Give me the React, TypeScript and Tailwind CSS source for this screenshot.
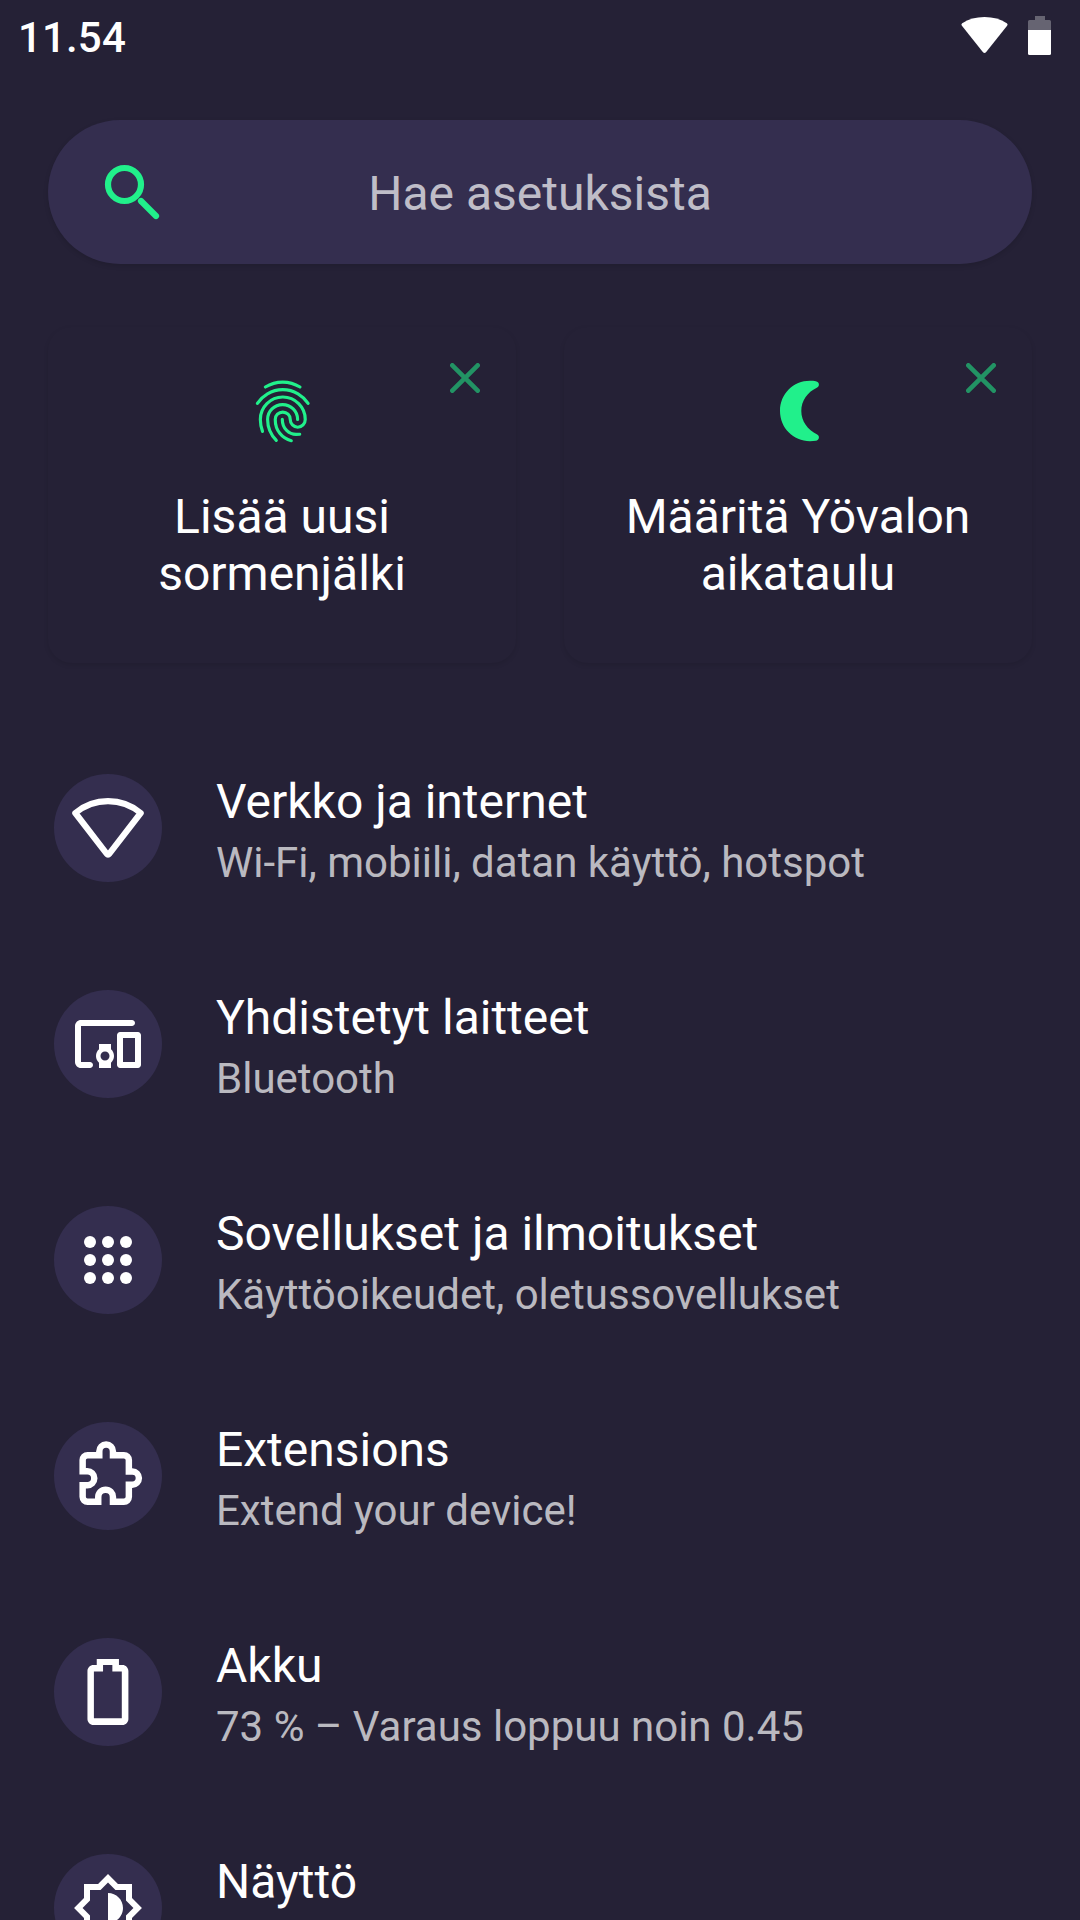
import React from 'react';

type RowProps = { icon: React.ReactNode; title: string; summary?: string };

const WifiIcon = () => (
  <svg viewBox="0 0 24 24" className="w-[72px] h-[72px]" fill="none" stroke="currentColor" strokeWidth="2.05" strokeLinejoin="round">
    <path d="M1.1 7A17 17 0 0 1 22.9 7L12.4 20.6Q12 21.1 11.6 20.6Z" />
  </svg>
);

const DevicesIcon = () => (
  <svg viewBox="0 0 24 24" className="w-[72px] h-[72px]" fill="currentColor">
    <path d="M3 6h17c.55 0 1-.45 1-1s-.45-1-1-1H3c-1.1 0-2 .9-2 2v12c0 1.1.9 2 2 2h3c.55 0 1-.45 1-1s-.45-1-1-1H3V6z" />
    <path d="M13 12H9v1.78c-.61.55-1 1.33-1 2.22s.39 1.67 1 2.22V20h4v-1.78c.61-.55 1-1.34 1-2.22s-.39-1.67-1-2.22V12zm-2 5.5c-.83 0-1.5-.67-1.5-1.5s.67-1.5 1.5-1.5 1.5.67 1.5 1.5-.67 1.5-1.5 1.5z" />
    <path d="M22 8h-6c-.5 0-1 .5-1 1v10c0 .5.5 1 1 1h6c.5 0 1-.5 1-1V9c0-.5-.5-1-1-1zm-1 10h-4v-8h4v8z" />
  </svg>
);

const AppsIcon = () => (
  <svg viewBox="0 0 24 24" className="w-[72px] h-[72px]" fill="currentColor">
    {[6, 12, 18].map(y => [6, 12, 18].map(x => <circle key={`${x}-${y}`} cx={x} cy={y} r="2" />))}
  </svg>
);

const ExtensionIcon = () => (
  <svg viewBox="0 0 24 24" className="w-[72px] h-[72px]" fill="none" stroke="currentColor" strokeWidth="2.15">
    <path d="M9.1 5.05V3.8a2.27 2.27 0 0 1 4.55 0V5.05H17.3a1.65 1.65 0 0 1 1.65 1.65V10.5H20.1a2.2 2.2 0 0 1 0 4.4H18.95V18.95a1.65 1.65 0 0 1-1.65 1.65H13.65V19a2.45 2.45 0 0 0-4.9 0V20.6H5.2a1.65 1.65 0 0 1-1.65-1.65V15.05H5.1a2.33 2.33 0 0 0 0-4.66H3.55V6.7A1.65 1.65 0 0 1 5.2 5.05Z" />
  </svg>
);

const BatteryIcon = () => (
  <svg viewBox="0 0 24 24" className="w-[72px] h-[72px]" fill="currentColor" fillRule="evenodd">
    <path d="M8.25 1H15.65V3H16.8C17.9 3 18.8 3.9 18.8 5V21C18.8 22.1 17.9 23 16.8 23H7.15C6.05 23 5.15 22.1 5.15 21V5C5.15 3.9 6.05 3 7.15 3H8.25ZM10.35 3V5.2H7.3V20.75H16.6V5.2H13.45V3Z" />
  </svg>
);

const BrightnessIcon = () => (
  <svg viewBox="0 0 24 24" className="w-[72px] h-[72px]" fill="currentColor">
    <path d="M20 8.69V4h-4.69L12 .69 8.69 4H4v4.69L.69 12 4 15.31V20h4.69L12 23.31 15.31 20H20v-4.69L23.31 12 20 8.69zm-2 5.79V18h-3.52L12 20.48 9.52 18H6v-3.52L3.52 12 6 9.52V6h3.52L12 3.52 14.48 6H18v3.52L20.48 12 18 14.48zM12 7v10c2.76 0 5-2.24 5-5s-2.24-5-5-5z" />
  </svg>
);

const FingerprintIcon = () => (
  <svg viewBox="0 0 24 24" className="w-[72px] h-[72px]" fill="none" stroke="currentColor" strokeWidth="1.05" strokeLinecap="round">
    <path d="M6.45 4A11 11 0 0 1 18 4" />
    <path d="M3.8 9.45A10.1 10.1 0 0 1 20.7 9.45" />
    <path d="M5.5 18.8C5 17.4 4.78 16.1 4.78 14.8A7.48 7.45 0 0 1 19.75 14.8A2.5 2.6 0 0 1 14.75 14.8A2.5 2.45 0 0 0 9.75 14.8C9.75 18.5 12 21.1 15.1 21.9" />
    <path d="M10.1 21.8C8.2 19.8 7.2 17.6 7.2 14.8A5 4.95 0 0 1 17.2 14.8" />
    <path d="M12.1 14.8C12.1 17.9 14.4 19.8 16.7 19.8C17.2 19.8 17.5 19.8 17.9 19.75" />
  </svg>
);

const MoonIcon = () => (
  <svg viewBox="0 0 24 24" className="w-[72px] h-[72px]" fill="currentColor">
    <path d="M16 1.95C10.4 1.95 6 6.4 6 12S10.4 22.05 16 22.05C16.7 22.05 17.4 22 17.95 21.9C19.1 21.7 19.35 20.3 18.4 19.8C15.2 18.3 13.1 15.4 13.1 12S15.2 5.7 18.4 4.2C19.35 3.7 19.1 2.3 17.95 2.1C17.4 2 16.7 1.95 16 1.95Z" />
  </svg>
);

const ROWS: RowProps[] = [
  { icon: <WifiIcon />, title: 'Verkko ja internet', summary: 'Wi-Fi, mobiili, datan käyttö, hotspot' },
  { icon: <DevicesIcon />, title: 'Yhdistetyt laitteet', summary: 'Bluetooth' },
  { icon: <AppsIcon />, title: 'Sovellukset ja ilmoitukset', summary: 'Käyttöoikeudet, oletussovellukset' },
  { icon: <ExtensionIcon />, title: 'Extensions', summary: 'Extend your device!' },
  { icon: <BatteryIcon />, title: 'Akku', summary: '73 % – Varaus loppuu noin 0.45' },
  { icon: <BrightnessIcon />, title: 'Näyttö' },
];

function StatusBar() {
  return (
    <header className="flex items-start justify-between shrink-0 h-[72px] pl-[18px] pr-[28px]">
      <span className="mt-[13px] text-[42px] leading-[49px] font-medium tracking-[0.15px]">11.54</span>
      <div className="flex items-start gap-5 pt-4">
        <svg viewBox="0 0 48 39" className="w-12 h-[39px]" fill="currentColor">
          <path d="M2.2 7.2Q11.5 1 24.5 1T46.8 7.2Q48.2 8.3 47.1 9.8L26 36.2Q24.5 37.8 23 36.2L1.9 9.8Q.8 8.3 2.2 7.2Z" />
        </svg>
        <svg viewBox="0 0 24 39" className="w-6 h-[39px]" fill="currentColor">
          <path opacity="0.3" d="M7 0H17V4H21.5Q23 4 23 5.5V14H0V5.5Q0 4 1.5 4H7Z" />
          <path d="M0 14H23V37.5Q23 39 21.5 39H1.5Q0 39 0 37.5Z" />
        </svg>
      </div>
    </header>
  );
}

function SuggestionCard({ icon, title }: { icon: React.ReactNode; title: React.ReactNode }) {
  return (
    <div className="relative flex-1 flex flex-col items-center h-[336px] pt-12 rounded-[24px] shadow-[0_2px_5px_rgba(0,0,0,0.1)]">
      <svg viewBox="0 0 30 30" className="absolute top-[36px] right-[36px] w-[30px] h-[30px] text-[#21F08B] opacity-55" fill="none" stroke="currentColor" strokeWidth="4.6" strokeLinecap="round">
        <path d="M2.3 2.3L27.7 27.7M27.7 2.3L2.3 27.7" />
      </svg>
      <div className="text-[#21F08B]">{icon}</div>
      <p className="mt-[41px] text-[48px] leading-[57px] text-center">{title}</p>
    </div>
  );
}

function SettingsRow({ icon, title, summary }: RowProps) {
  return (
    <div className="flex items-start h-[216px] shrink-0 pl-[54px]">
      <div className="mt-[54px] grid place-items-center w-[108px] h-[108px] rounded-full bg-[#342E4F]">{icon}</div>
      <div className="ml-[54px] pt-[53px]">
        <p className="text-[48px] leading-[57px]">{title}</p>
        {summary && <p className="mt-2 text-[42px] leading-[50px] text-white/70">{summary}</p>}
      </div>
    </div>
  );
}

export default function App() {
  return (
    <div className="w-[1080px] h-[1920px] overflow-hidden flex flex-col bg-[#252136] text-white font-[Roboto,sans-serif]">
      <StatusBar />

      <div className="mt-12 mx-12 flex items-center shrink-0 h-[144px] px-12 rounded-full bg-[#342E4F] shadow-[0_2px_5px_rgba(0,0,0,0.13)]">
        <svg viewBox="0 0 72 72" className="w-[72px] h-[72px] text-[#21F08B]" fill="none" stroke="currentColor" strokeWidth="6.2">
          <circle cx="28.5" cy="28.5" r="16.5" />
          <path d="M45 45L60 60" strokeLinecap="round" />
        </svg>
        <span className="flex-1 pt-[3px] pr-[72px] text-center text-[48px] leading-[57px] text-white/70">Hae asetuksista</span>
      </div>

      <div className="mt-[63px] mx-12 flex shrink-0 gap-12">
        <SuggestionCard icon={<FingerprintIcon />} title={<>Lisää uusi<br />sormenjälki</>} />
        <SuggestionCard icon={<MoonIcon />} title={<>Määritä Yövalon<br />aikataulu</>} />
      </div>

      <main className="mt-[57px] flex flex-col">
        {ROWS.map(r => <SettingsRow key={r.title} {...r} />)}
      </main>
    </div>
  );
}
